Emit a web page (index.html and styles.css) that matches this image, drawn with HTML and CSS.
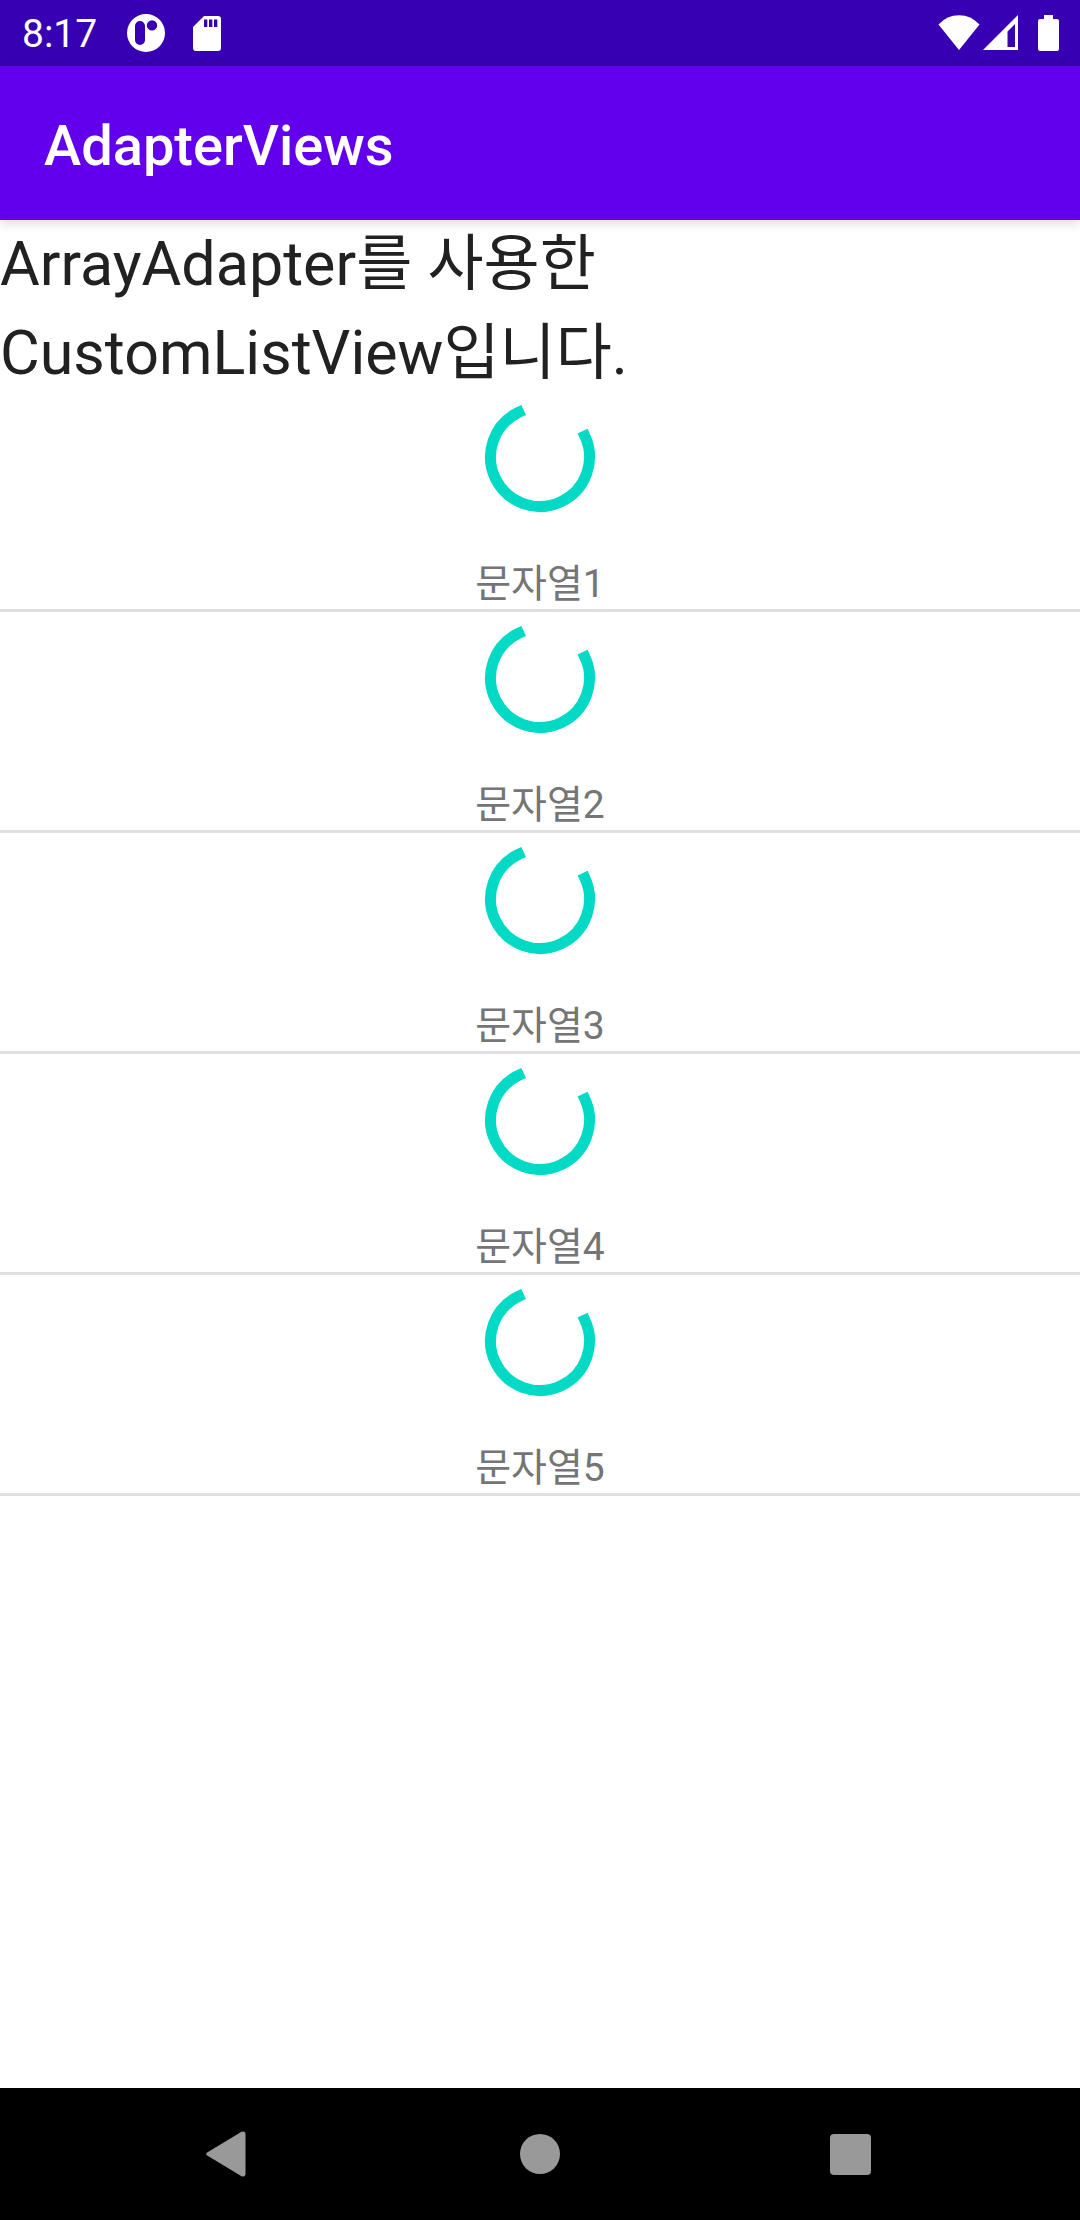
FILE: index.html
```html
<!DOCTYPE html>
<html lang="ko">
<head>
<meta charset="utf-8">
<meta name="viewport" content="width=device-width, initial-scale=1">
<title>AdapterViews</title>
<link rel="stylesheet" href="styles.css">
</head>
<body>
<svg class="defs" width="0" height="0" aria-hidden="true">
  <symbol id="spinner" viewBox="0 0 132 132">
    <path d="M44.7 21.3A49.5 49.5 0 1 0 110.9 45.1" fill="none" stroke="currentColor" stroke-width="11" stroke-linecap="square"/>
  </symbol>
</svg>
<div class="screen">
  <div class="status-bar">
    <div class="status-left">
      <time class="clock">8:17</time>
      <svg class="status-icon" width="38" height="38" viewBox="0 0 38 38" aria-hidden="true">
        <path fill="currentColor" fill-rule="evenodd" d="M19 0A19 19 0 1 1 19 38A19 19 0 1 1 19 0ZM8 12V26A5 5 0 0 0 18 26V12A5 5 0 0 0 8 12ZM25 6.200A5.200 5.200 0 1 0 25 16.600A5.200 5.200 0 1 0 25 6.200Z"/>
      </svg>
      <svg class="status-icon" width="28" height="35" viewBox="0 0 28 35" aria-hidden="true">
        <path fill="currentColor" fill-rule="evenodd" d="M11 0H25A3 3 0 0 1 28 3V32A3 3 0 0 1 25 35H3A3 3 0 0 1 0 32V11ZM11 3.500V11H14.300V3.500ZM16 3.500V11H19.300V3.500ZM21 3.500V11H24.300V3.500Z"/>
      </svg>
    </div>
    <div class="status-right">
      <svg width="42" height="36" viewBox="0 0 42 36" aria-hidden="true">
        <path fill="currentColor" d="M0.500 9.500Q9 0.300 21 0.300T41.500 9.500L21 35Z"/>
      </svg>
      <svg width="36" height="36" viewBox="0 0 36 36" aria-hidden="true">
        <path fill="currentColor" fill-rule="evenodd" d="M35 0V35H0ZM32 9L24.500 16.500V32H32Z"/>
      </svg>
      <svg class="battery" width="21" height="36" viewBox="0 0 21 36" aria-hidden="true">
        <path fill="currentColor" d="M6 0H15V4H19A2 2 0 0 1 21 6V34A2 2 0 0 1 19 36H2A2 2 0 0 1 0 34V6A2 2 0 0 1 2 4H6Z"/>
      </svg>
    </div>
  </div>
  <header class="app-bar"><h1 class="app-title">AdapterViews</h1></header>
  <main class="content">
    <p class="intro">ArrayAdapter를 사용한<br>CustomListView입니다.</p>
    <ul class="list">
      <li class="item"><svg class="spinner" aria-hidden="true"><use href="#spinner"/></svg><span class="label">문자열1</span></li>
      <li class="item"><svg class="spinner" aria-hidden="true"><use href="#spinner"/></svg><span class="label">문자열2</span></li>
      <li class="item"><svg class="spinner" aria-hidden="true"><use href="#spinner"/></svg><span class="label">문자열3</span></li>
      <li class="item"><svg class="spinner" aria-hidden="true"><use href="#spinner"/></svg><span class="label">문자열4</span></li>
      <li class="item"><svg class="spinner" aria-hidden="true"><use href="#spinner"/></svg><span class="label">문자열5</span></li>
    </ul>
  </main>
  <nav class="nav-bar">
    <button class="nav-button" type="button" aria-label="뒤로">
      <svg width="48" height="48" viewBox="0 0 48 48"><path fill="currentColor" d="M1.200 22.400L35.500 1.800Q39.500 0.500 39.500 4.500V43.500Q39.500 47.500 35.500 46.200L1.200 25.600Q-0.800 24 1.200 22.400Z"/></svg>
    </button>
    <button class="nav-button" type="button" aria-label="홈">
      <svg width="48" height="48" viewBox="0 0 48 48"><circle fill="currentColor" cx="24" cy="24" r="20"/></svg>
    </button>
    <button class="nav-button" type="button" aria-label="최근 앱">
      <svg width="48" height="48" viewBox="0 0 48 48"><rect fill="currentColor" x="4" y="4" width="41" height="41" rx="4"/></svg>
    </button>
  </nav>
</div>
</body>
</html>
```
FILE: styles.css
```css
* {
  box-sizing: border-box;
}

body {
  margin: 0;
  background: #fff;
  font-family: Roboto, "Noto Sans CJK KR", sans-serif;
}

.defs {
  display: none;
}

.screen {
  display: flex;
  flex-direction: column;
  min-height: 100vh;
}

.status-bar {
  display: flex;
  justify-content: space-between;
  align-items: center;
  height: 66px;
  padding: 0 21px 0 22px;
  background: #3700b3;
  color: #fff;
}

.status-left,
.status-right {
  display: flex;
  align-items: center;
}

.status-left {
  gap: 28px;
}

.status-right {
  gap: 3px;
}

.battery {
  margin-left: 16px;
}

.clock {
  padding: 2px 2px 0 0;
  font-size: 39px;
  line-height: 46px;
}

.app-bar {
  display: flex;
  align-items: center;
  height: 154px;
  padding: 6px 44px 0;
  background: #6200ee;
  color: #fff;
  box-shadow: 0 3px 11px rgba(0, 0, 0, 0.15);
}

.app-title {
  margin: 0;
  font-size: 56px;
  font-weight: 500;
  line-height: 64px;
}

.content {
  flex: 1;
}

.intro {
  margin: 0 0 -7px;
  color: #212121;
  font-size: 61px;
  line-height: 89px;
}

.list {
  margin: 0;
  padding: 0;
  list-style: none;
}

.item {
  display: flex;
  flex-direction: column;
  align-items: center;
  justify-content: space-between;
  height: 221px;
  border-bottom: 3px solid #e0e0e0;
}

.spinner {
  width: 132px;
  height: 132px;
  color: #03dac5;
}

.label {
  color: #757575;
  font-size: 39px;
  line-height: 50px;
}

.nav-bar {
  display: flex;
  justify-content: center;
  height: 132px;
  background: #000;
}

.nav-button {
  display: flex;
  align-items: center;
  justify-content: center;
  width: 310px;
  padding: 0;
  border: 0;
  background: none;
  color: #999;
}
```
